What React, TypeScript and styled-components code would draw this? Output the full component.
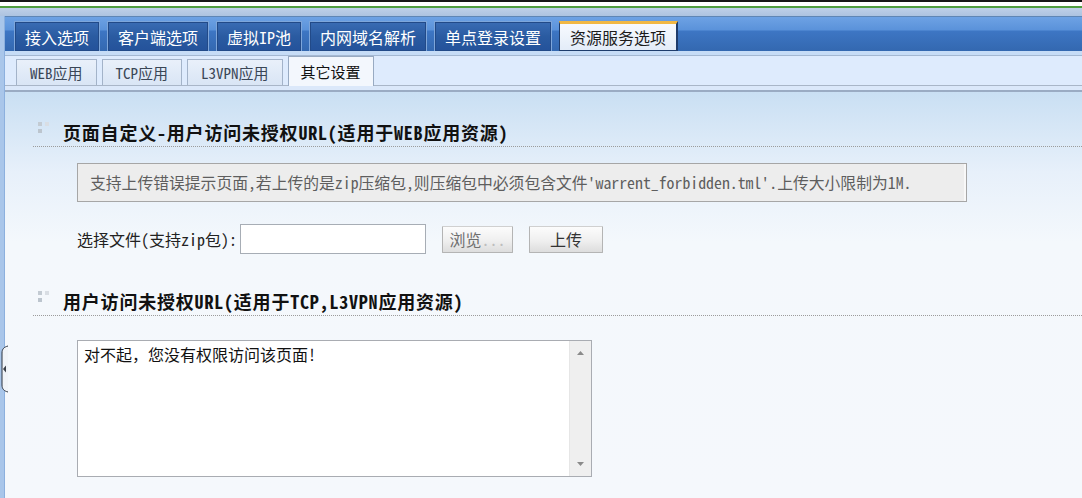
import styled, { createGlobalStyle } from "styled-components";

const FONT = `"Noto Sans Mono CJK SC", "Noto Sans CJK SC", "Liberation Mono", monospace`;

const GlobalStyle = createGlobalStyle`
  html, body {
    margin: 0;
    padding: 0;
    background: #f5f8fc;
  }
  body {
    font-family: ${FONT};
  }
`;

const Page = styled.div`
  display: flex;
  flex-direction: column;
  min-height: 100vh;
  width: 1082px;
  overflow: hidden;
`;

const TopStripe = styled.div`
  height: 4px;
  background: #ffffff;
  border-top: 2px solid #161616;
  border-bottom: 2px solid #4f9d3f;
`;

const HeaderBand = styled.div`
  height: 8px;
  background: linear-gradient(#bfd0e8, #adc3e0);
`;

const Body = styled.div`
  flex: 1;
  display: flex;
`;

const LeftRail = styled.div`
  position: relative;
  width: 4px;
  background: #a9c6ea;
  border-right: 1px solid #8cb0de;
`;

const Handle = styled.svg`
  position: absolute;
  top: 329px;
  left: 0;
  z-index: 2;
`;

const Main = styled.div`
  flex: 1;
  display: flex;
  flex-direction: column;
`;

const TabBar = styled.div`
  display: flex;
  align-items: flex-end;
  gap: 7px;
  height: 34px;
  padding-left: 9px;
  border-top: 1px solid #5f86b5;
  background: linear-gradient(#6ea2e4 0, #5a92da 13px, #3d76c4 14px, #3368b0 100%);
`;

const Tab = styled.div<{ $active?: boolean }>`
  height: 30px;
  box-sizing: border-box;
  display: flex;
  align-items: center;
  padding: 0 10px;
  font-size: 16px;
  white-space: nowrap;
  ${(p) =>
    p.$active
      ? `
    color: #1c1c1c;
    background: linear-gradient(#f7faff, #e3ecf8);
    border: 1px solid #1e3c6c;
    border-right-width: 2px;
    border-top: 3px solid #f1b845;
  `
      : `
    color: #ffffff;
    background: linear-gradient(#3a6cb4, #2a5ba1 50%, #24529a);
    border: 1px solid #7ea6da;
    border-bottom: none;
    box-shadow: inset 0 0 0 1px #224a88;
  `}
`;

const SubWrap = styled.div`
  padding-top: 4px;
  background: #c6dcf6;
`;

const SubBar = styled.div`
  display: flex;
  align-items: flex-end;
  gap: 5px;
  height: 29px;
  padding-left: 11px;
  background: #deebfd;
  border-top: 1px solid #a4b8d2;
  border-bottom: 1px solid #a9b6c8;
`;

const SubTab = styled.div<{ $active?: boolean }>`
  box-sizing: border-box;
  display: flex;
  align-items: center;
  padding: 0 13px;
  font-size: 15px;
  white-space: nowrap;
  border: 1px solid #a3b3c9;
  ${(p) =>
    p.$active
      ? `
    height: 30px;
    margin-bottom: -1px;
    padding: 0 12px;
    color: #111;
    background: #f3f7fd;
    border-bottom: none;
    border-color: #98aac2;
  `
      : `
    height: 26px;
    color: #3a4656;
    background: linear-gradient(#e9f0fa, #d9e5f5);
    border-bottom: none;
  `}
`;

const Divider = styled.div`
  height: 4px;
  background: #dbe8fa;
  border-bottom: 2px solid #9aabc3;
`;

const Content = styled.div`
  flex: 1;
  padding-top: 26px;
  background: linear-gradient(#c9dff3 0, #e7f0fa 80px, #f4f8fc 150px, #f5f8fc 100%);
`;

const SectionTitle = styled.div<{ $gap?: number }>`
  display: flex;
  align-items: center;
  gap: 14px;
  height: 28px;
  margin-left: 28px;
  margin-top: ${(p) => p.$gap ?? 0}px;
  padding-left: 5px;
  border-bottom: 1px dotted #9c9c9c;
  font-size: 18px;
  font-weight: bold;
  letter-spacing: 0.8px;
  color: #111;
  white-space: nowrap;
`;

const Dots = styled.svg`
  flex-shrink: 0;
  margin-bottom: 9px;
`;

const Block = styled.div<{ $top: number }>`
  margin: ${(p) => p.$top}px 0 0 72px;
`;

const Notice = styled.div`
  box-sizing: border-box;
  width: 890px;
  height: 39px;
  display: flex;
  align-items: center;
  padding-left: 12px;
  background: #ededed;
  border: 1px solid #a6a6a6;
  box-shadow: inset -2px 0 0 #f8f8f8;
  color: #5e5e5e;
  font-size: 15.8px;
  white-space: nowrap;
`;

const FileRow = styled.div`
  display: flex;
  align-items: center;
  height: 30px;
  font-size: 16px;
  color: #222;
  white-space: nowrap;
`;

const FileInput = styled.input`
  box-sizing: border-box;
  width: 186px;
  height: 30px;
  margin: 0 16px 0 3px;
  border: 1px solid #a7adb5;
  background: #fff;
  outline: none;
`;

const Button = styled.button<{ $width: number; $dim?: boolean }>`
  box-sizing: border-box;
  width: ${(p) => p.$width}px;
  height: 27px;
  margin-right: 16px;
  padding: 0;
  font-family: ${FONT};
  font-size: 16px;
  color: ${(p) => (p.$dim ? "#6f6f6f" : "#333")};
  background: linear-gradient(#fcfcfc, #efefef 55%, #dddddd);
  border: 1px solid #b4b4b4;
  border-top-color: #d0d0d0;
  border-radius: 1px;
`;

const Faint = styled.span`
  color: #bdbdbd;
`;

const TextBox = styled.div`
  box-sizing: border-box;
  display: flex;
  width: 515px;
  height: 137px;
  border: 1px solid #a9acb2;
  background: #fff;
`;

const Message = styled.textarea`
  flex: 1;
  resize: none;
  border: none;
  outline: none;
  padding: 2px 6px;
  font-family: ${FONT};
  font-size: 16px;
  line-height: 22px;
  color: #111;
  background: transparent;
  overflow: hidden;
`;

const ScrollRail = styled.div`
  width: 21px;
  display: flex;
  flex-direction: column;
  justify-content: space-between;
  align-items: center;
  padding: 10px 0;
  background: #efefef;
  border-left: 1px solid #e6e6e6;
`;

const tabs = ["接入选项", "客户端选项", "虚拟IP池", "内网域名解析", "单点登录设置", "资源服务选项"];
const subTabs = ["WEB应用", "TCP应用", "L3VPN应用", "其它设置"];

function DotIcon() {
  return (
    <Dots width="11" height="11" viewBox="0 0 11 11">
      <rect x="0" y="0" width="4" height="4" fill="#c3cbd3" />
      <rect x="7" y="0" width="4" height="4" fill="#d9dee4" />
      <rect x="0" y="7" width="4" height="4" fill="#bcc5ce" />
    </Dots>
  );
}

function App() {
  return (
    <>
      <GlobalStyle />
      <Page>
        <TopStripe />
        <HeaderBand />
        <Body>
          <LeftRail>
            <Handle width="9" height="48" viewBox="0 0 9 48">
              <path d="M8 1 C4 2 2 4 2 8 L2 40 C2 44 4 46 8 47" fill="#f1f4f8" stroke="#2d3440" strokeWidth="1" />
              <path d="M3 24 L6 20.5 L6 27.5 Z" fill="#3a3f48" />
            </Handle>
          </LeftRail>
          <Main>
            <TabBar>
              {tabs.map((t, i) => (
                <Tab key={t} $active={i === tabs.length - 1}>
                  {t}
                </Tab>
              ))}
            </TabBar>
            <SubWrap>
              <SubBar>
                {subTabs.map((t, i) => (
                  <SubTab key={t} $active={i === subTabs.length - 1}>
                    {t}
                  </SubTab>
                ))}
              </SubBar>
            </SubWrap>
            <Divider />
            <Content>
              <SectionTitle>
                <DotIcon />
                页面自定义-用户访问未授权URL(适用于WEB应用资源)
              </SectionTitle>
              <Block $top={16}>
                <Notice>
                  支持上传错误提示页面,若上传的是zip压缩包,则压缩包中必须包含文件'warrent_forbidden.tml'.上传大小限制为1M.
                </Notice>
              </Block>
              <Block $top={22}>
                <FileRow>
                  选择文件(支持zip包):
                  <FileInput type="text" />
                  <Button $width={71} $dim>
                    浏览<Faint>...</Faint>
                  </Button>
                  <Button $width={74}>上传</Button>
                </FileRow>
              </Block>
              <SectionTitle $gap={33}>
                <DotIcon />
                用户访问未授权URL(适用于TCP,L3VPN应用资源)
              </SectionTitle>
              <Block $top={24}>
                <TextBox>
                  <Message defaultValue="对不起，您没有权限访问该页面!" />
                  <ScrollRail>
                    <svg width="7" height="4" viewBox="0 0 7 4">
                      <path d="M0 4 L3.5 0 L7 4 Z" fill="#8a8a8a" />
                    </svg>
                    <svg width="7" height="4" viewBox="0 0 7 4">
                      <path d="M0 0 L3.5 4 L7 0 Z" fill="#8a8a8a" />
                    </svg>
                  </ScrollRail>
                </TextBox>
              </Block>
            </Content>
          </Main>
        </Body>
      </Page>
    </>
  );
}

export default App;
